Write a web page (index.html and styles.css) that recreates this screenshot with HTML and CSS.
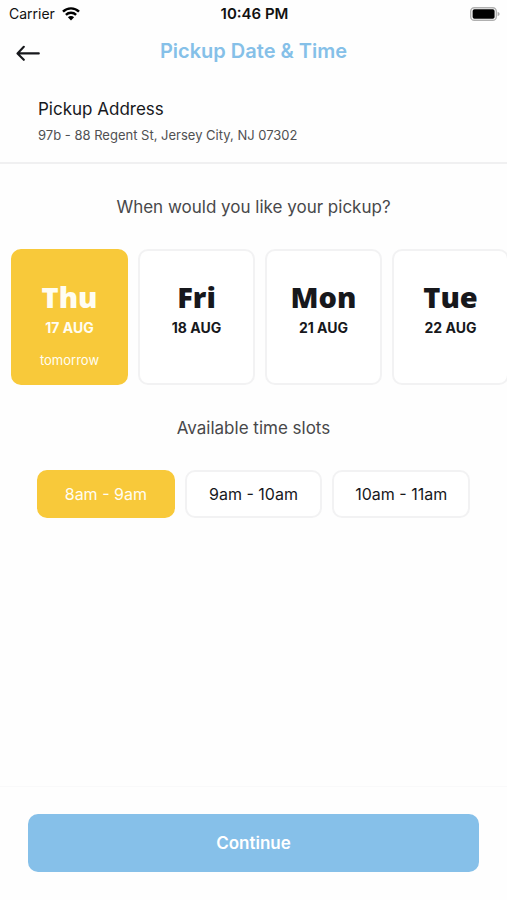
FILE: index.html
```html
<!DOCTYPE html>
<html lang="en">
<head>
<meta charset="utf-8">
<meta name="viewport" content="width=device-width, initial-scale=1">
<title>Pickup Date &amp; Time</title>
<link rel="stylesheet" href="styles.css">
</head>
<body>
<div class="screen">
  <div class="status">
    <div class="carrier">
      <span>Carrier</span>
      <svg class="wifi" viewBox="0 0 18 14" aria-hidden="true">
        <path d="M1 4.7a11.3 11.3 0 0 1 16 0M3.9 7.9a7.2 7.2 0 0 1 10.2 0" fill="none" stroke="#000" stroke-width="2.4"/>
        <path d="M9 13.4 5.9 10.3a4.4 4.4 0 0 1 6.2 0z" fill="#000"/>
      </svg>
    </div>
    <time class="clock">10:46 PM</time>
    <svg class="battery" viewBox="0 0 30 14" aria-hidden="true">
      <rect x="0.7" y="0.7" width="25.6" height="12.6" rx="3.6" fill="#fff" stroke="#b0b0b0" stroke-width="1.4"/>
      <rect x="2.6" y="2.3" width="22" height="9.4" rx="1.8" fill="#000"/>
      <path d="M27.6 4.8q2.1.8 2.1 2.2t-2.1 2.2z" fill="#aaa"/>
    </svg>
  </div>
  <header class="nav">
    <button class="back" type="button" aria-label="Back">
      <svg viewBox="0 0 24 16" aria-hidden="true">
        <path d="M22.8 8.4H1.7M7.8 1.8 1.5 8.4l6.3 6.4" fill="none" stroke="#17181c" stroke-width="2.1" stroke-linecap="round" stroke-linejoin="round"/>
      </svg>
    </button>
    <h1>Pickup Date &amp; Time</h1>
  </header>
  <section class="address">
    <h2>Pickup Address</h2>
    <p>97b - 88 Regent St, Jersey City, NJ 07302</p>
  </section>
  <main>
    <h2 class="question">When would you like your pickup?</h2>
    <div class="days">
      <button class="day selected" type="button" aria-pressed="true"><span class="name">Thu</span><span class="date">17 AUG</span><span class="note">tomorrow</span></button>
      <button class="day" type="button"><span class="name">Fri</span><span class="date">18 AUG</span></button>
      <button class="day" type="button"><span class="name">Mon</span><span class="date">21 AUG</span></button>
      <button class="day" type="button"><span class="name">Tue</span><span class="date">22 AUG</span></button>
    </div>
    <h2 class="question">Available time slots</h2>
    <div class="slots">
      <button class="slot selected" type="button" aria-pressed="true">8am - 9am</button>
      <button class="slot" type="button">9am - 10am</button>
      <button class="slot" type="button">10am - 11am</button>
    </div>
  </main>
  <footer>
    <button class="continue" type="button">Continue</button>
  </footer>
</div>
</body>
</html>
```
FILE: styles.css
```css
* { box-sizing: border-box; }
body, h1, h2, p { margin: 0; }
body {
  background: #fefefe;
  color: #17181c;
  font-family: Inter, "Liberation Sans", sans-serif;
}
button {
  margin: 0;
  padding: 0;
  border: 0;
  background: none;
  color: inherit;
  font: inherit;
  cursor: pointer;
}
svg { display: block; }
.screen {
  display: flex;
  flex-direction: column;
  min-height: 100vh;
}
.status {
  display: grid;
  grid-template-columns: 1fr auto 1fr;
  align-items: center;
  padding: 4px 7px 4px 9px;
  color: #111;
  font-size: 14px;
  line-height: 20px;
}
.carrier {
  display: flex;
  align-items: center;
  gap: 7px;
}
.wifi { width: 18px; height: 14px; }
.clock { font-size: 15px; font-weight: 600; }
.battery {
  width: 30px;
  height: 14px;
  justify-self: end;
}
.nav {
  display: grid;
  grid-template-columns: 40px 1fr 40px;
  align-items: center;
  padding: 8px 8px;
}
.back {
  display: grid;
  place-items: end center;
  height: 24px;
}
.back svg { width: 24px; height: 16px; }
.nav h1 {
  color: #85c0e8;
  font-size: 20px;
  font-weight: 600;
  line-height: 30px;
  text-align: center;
}
.nav .back { padding-bottom: 2px; }
.address {
  padding: 21px 38px 15px;
  border-bottom: 2px solid #f0f0f1;
}
.address h2 {
  font-size: 17px;
  font-weight: 400;
  line-height: 28px;
}
.address p {
  color: #505052;
  font-size: 13px;
  line-height: 24px;
}
main { flex: 1; }
.question {
  padding: 29px 16px 27px;
  color: #48484a;
  font-size: 17px;
  font-weight: 400;
  line-height: 29px;
  text-align: center;
}
.days {
  display: flex;
  gap: 10px;
  padding-left: 11px;
  overflow: hidden;
}
.day {
  display: flex;
  flex: 0 0 117px;
  flex-direction: column;
  align-items: center;
  min-height: 136px;
  padding: 29px 0 9px;
  border: 2px solid #f2f2f3;
  border-radius: 10px;
  background: #fff;
}
.name {
  font-family: "Open Sans", Inter, sans-serif;
  font-size: 29px;
  font-weight: 800;
  line-height: 34px;
}
.date {
  font-size: 14px;
  font-weight: 700;
  line-height: 28px;
}
.note {
  margin-top: 4px;
  font-size: 13px;
  line-height: 28px;
}
.selected {
  border-color: #f8c93a;
  background: #f8c93a;
  color: #fffdf2;
}
.slots {
  display: grid;
  grid-template-columns: repeat(3, 1fr);
  gap: 10px;
  padding: 0 37px;
}
.slot {
  height: 48px;
  border: 2px solid #f2f2f3;
  border-radius: 10px;
  background: #fff;
  font-size: 16px;
}
.slot.selected {
  border-color: #f8c93a;
  background: #f8c93a;
}
footer {
  padding: 27px 28px 28px;
  border-top: 1px solid #f9f9fa;
}
.continue {
  width: 100%;
  height: 58px;
  border-radius: 10px;
  background: #86c0e9;
  color: #fff;
  font-size: 17px;
  font-weight: 600;
}
```
